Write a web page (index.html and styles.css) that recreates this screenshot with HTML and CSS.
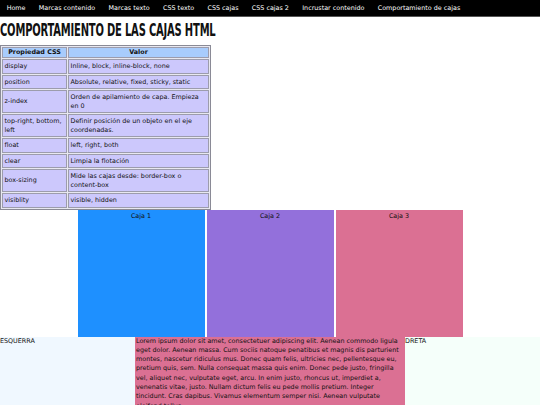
FILE: index.html
```html
<!DOCTYPE html>
<html lang="es">
<head>
<meta charset="utf-8">
<title>Comportamiento de cajas</title>
<link rel="stylesheet" href="styles.css">
</head>
<body>
<nav class="nav">
  <ul class="nav-list">
    <li><a href="#">Home</a></li>
    <li><a href="#">Marcas contenido</a></li>
    <li><a href="#">Marcas texto</a></li>
    <li><a href="#">CSS texto</a></li>
    <li><a href="#">CSS cajas</a></li>
    <li><a href="#">CSS cajas 2</a></li>
    <li><a href="#">Incrustar contenido</a></li>
    <li><a href="#">Comportamiento de cajas</a></li>
  </ul>
</nav>
<h1 class="title"><span class="title-text">COMPORTAMIENTO DE LAS CAJAS HTML</span></h1>
<table class="props">
  <thead>
    <tr><th class="c1">Propiedad CSS</th><th class="c2">Valor</th></tr>
  </thead>
  <tbody>
    <tr><td>display</td><td>Inline, block, inline-block, none</td></tr>
    <tr><td>position</td><td>Absolute, relative, fixed, sticky, static</td></tr>
    <tr><td>z-index</td><td>Orden de apilamiento de capa. Empieza en 0</td></tr>
    <tr><td>top-right, bottom, left</td><td>Definir posición de un objeto en el eje coordenadas.</td></tr>
    <tr><td>float</td><td>left, right, both</td></tr>
    <tr><td>clear</td><td>Limpia la flotación</td></tr>
    <tr><td>box-sizing</td><td>Mide las cajas desde: border-box o content-box</td></tr>
    <tr><td>visiblity</td><td>visible, hidden</td></tr>
  </tbody>
</table>
<div class="boxes">
  <div class="box box-1">Caja 1</div>
  <div class="box box-2">Caja 2</div>
  <div class="box box-3">Caja 3</div>
</div>
<div class="cols">
  <div class="col col-left">ESQUERRA</div>
  <div class="col col-mid">Lorem ipsum dolor sit amet, consectetuer adipiscing elit. Aenean commodo ligula eget dolor. Aenean massa. Cum sociis natoque penatibus et magnis dis parturient montes, nascetur ridiculus mus. Donec quam felis, ultricies nec, pellentesque eu, pretium quis, sem. Nulla consequat massa quis enim. Donec pede justo, fringilla vel, aliquet nec, vulputate eget, arcu. In enim justo, rhoncus ut, imperdiet a, venenatis vitae, justo. Nullam dictum felis eu pede mollis pretium. Integer tincidunt. Cras dapibus. Vivamus elementum semper nisi. Aenean vulputate eleifend tellus.</div>
  <div class="col col-right">DRETA</div>
</div>
</body>
</html>
```
FILE: styles.css
```css
html, body {
  margin: 0;
  padding: 0;
  background: #ffffff;
  font-family: "DejaVu Sans", sans-serif;
  font-size: 6.4px;
  color: #111;
}
.nav {
  background: #000;
  height: 16px;
  border-bottom: 1px solid #555;
}
.nav-list {
  list-style: none;
  margin: 0;
  padding: 0;
  display: flex;
  height: 16px;
  align-items: center;
}
.nav-list li {
  padding: 0 6.65px;
}
.nav-list a {
  color: #fff;
  text-decoration: none;
  font-size: 6.4px;
}
.title {
  margin: 4px 0 6px 0;
  height: 18px;
  line-height: 18px;
  font-size: 18px;
  font-family: "DejaVu Sans Condensed", "DejaVu Sans", sans-serif;
  font-weight: bold;
  white-space: nowrap;
}
.title-text {
  display: inline-block;
  transform: scaleX(0.615);
  transform-origin: left center;
  letter-spacing: -0.3px;
}
.props {
  width: 211px;
  border: 1px solid #8a8a96;
  border-spacing: 1px;
  background: #e8e8f0;
  font-size: 6.4px;
}
.props th, .props td {
  border: 1px solid #9c9cac;
  padding: 2px 1px 2px 1.5px;
  line-height: 8.5px;
  text-align: left;
  vertical-align: middle;
}
.props th {
  background: #a8ccfc;
  text-align: center;
  font-weight: bold;
  padding: 0 2px;
  line-height: 9px;
  white-space: nowrap;
}
.props td {
  background: #ccc8fc;
}
.props .c1 { width: 59px; }
.boxes {
  display: flex;
  justify-content: center;
  gap: 2px;
}
.box {
  width: 127px;
  height: 127px;
  text-align: center;
  font-size: 6.4px;
  padding-top: 2px;
  box-sizing: border-box;
}
.box-1 { background: #1e90ff; }
.box-2 { background: #9370db; }
.box-3 { background: #db7093; }
.cols {
  display: grid;
  grid-template-columns: 25% 50% 25%;
  min-height: 80px;
}
.col {
  font-size: 6.4px;
  line-height: 9.3px;
}
.col-left { background: #f0f8ff; }
.col-mid { background: #db7093; padding: 0 0 0 1px; font-size: 6.4px; }
.col-right { background: #f5fffa; }
```
